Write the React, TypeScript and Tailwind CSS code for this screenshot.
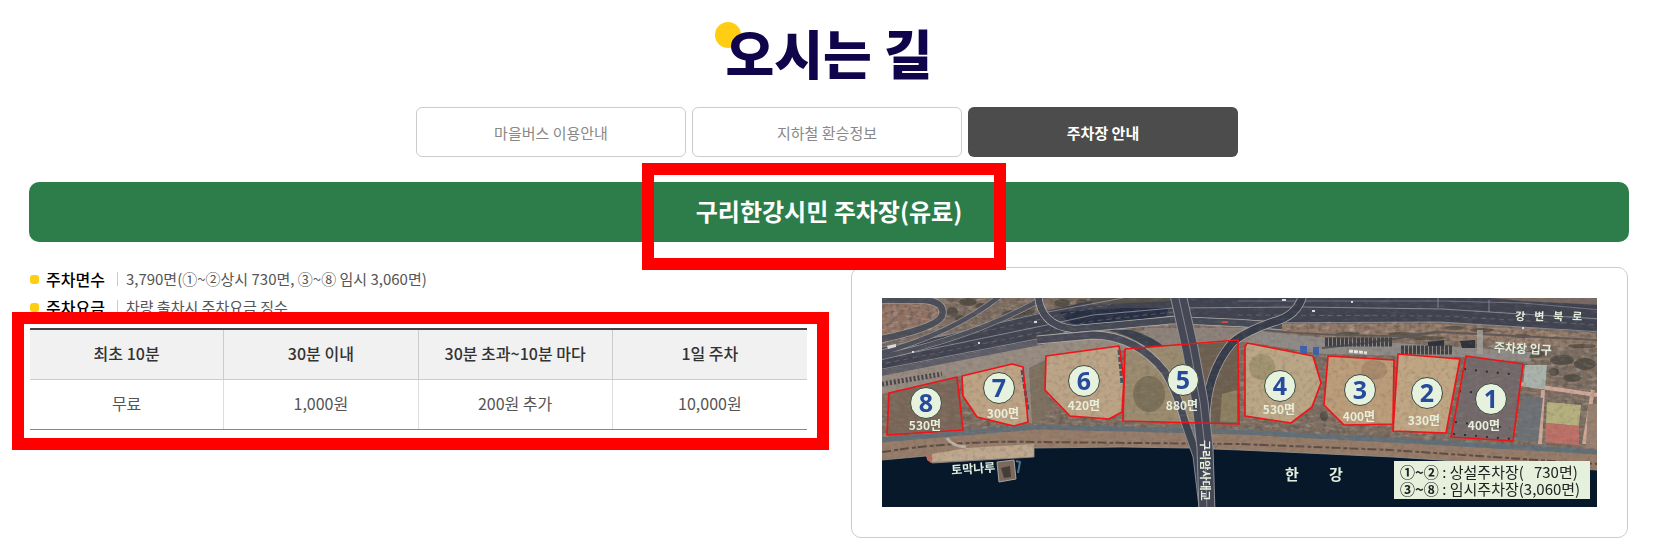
type Lot = {
  no: number;
  spaces: number;
  outline: string;
  x: number;
  y: number;
  labelX: number;
  labelY: number;
};

const TABS = ["마을버스 이용안내", "지하철 환승정보", "주차장 안내"];

const INFO = [
  { label: "주차면수", value: "3,790면(①~②상시 730면, ③~⑧ 임시 3,060면)" },
  { label: "주차요금", value: "차량 출차시 주차요금 징수" },
];

const FEES = [
  { label: "최초 10분", fee: "무료" },
  { label: "30분 이내", fee: "1,000원" },
  { label: "30분 초과~10분 마다", fee: "200원 추가" },
  { label: "1일 주차", fee: "10,000원" },
];

const LOTS: Lot[] = [
  { no: 8, spaces: 530, outline: "7,95 75,79 81,132 5,137", x: 44, y: 105, labelX: 43, labelY: 126 },
  { no: 7, spaces: 300, outline: "80,78 130,66 141,69 146,124 132,128 95,119 81,98", x: 117, y: 90, labelX: 121, labelY: 114 },
  { no: 6, spaces: 420, outline: "164,58 237,48 242,82 240,114 227,121 188,118 163,92", x: 202, y: 83, labelX: 202, labelY: 106 },
  { no: 5, spaces: 880, outline: "243,51 356,42 357,126 241,123", x: 301, y: 82, labelX: 300, labelY: 106 },
  { no: 4, spaces: 530, outline: "363,49 365,45 431,58 439,85 430,109 409,125 363,118", x: 398, y: 88, labelX: 397, labelY: 110 },
  { no: 3, spaces: 400, outline: "446,58 512,62 511,126 462,127 442,107", x: 478, y: 92, labelX: 477, labelY: 117 },
  { no: 2, spaces: 330, outline: "516,56 578,61 564,135 511,133", x: 545, y: 95, labelX: 542, labelY: 121 },
  { no: 1, spaces: 400, outline: "584,58 641,66 631,143 569,139", x: 609, y: 101, labelX: 602, labelY: 126 },
];

const LOT_FILL: Record<number, string> = {
  8: "#796759",
  7: "#bda384",
  6: "#bba385",
  5: "#9a8a6e",
  4: "#baa685",
  3: "#bb9c79",
  2: "#bfa582",
  1: "#74696a",
};

// x, y, rx, ry
const TREES = [
  [70, 14, 6, 5], [86, 4, 9, 4], [78, 20, 5, 3], [100, 8, 7, 3], [132, 16, 12, 4], [146, 12, 7, 5],
  [180, 5, 8, 4], [200, 4, 6, 3], [222, 3, 10, 3],
  [520, 36, 14, 2], [545, 40, 18, 2], [572, 30, 10, 2], [600, 32, 12, 2], [652, 56, 10, 4], [680, 62, 12, 5],
  [703, 66, 11, 6], [690, 80, 9, 4], [672, 74, 5, 4], [640, 38, 8, 2], [700, 48, 14, 2], [442, 118, 4, 5],
  [156, 68, 3, 6], [157, 100, 3, 8], [466, 36, 12, 2],
];

function ParkingMap() {
  return (
    <svg
      viewBox="0 0 715 209"
      role="img"
      aria-label="구리한강시민 주차장 위치도"
      className="block h-auto w-full font-['Noto_Sans_CJK_KR',sans-serif]"
    >
      <defs>
        <filter id="grain" x="0" y="0" width="100%" height="100%">
          <feTurbulence type="fractalNoise" baseFrequency="0.22" numOctaves="4" seed="4" />
          <feColorMatrix values="0 0 0 0 0.1  0 0 0 0 0.09  0 0 0 0 0.09  2.2 2.2 0 0 -2.1" />
        </filter>
        <filter id="speckle" x="0" y="0" width="100%" height="100%">
          <feTurbulence type="fractalNoise" baseFrequency="0.12 0.3" numOctaves="3" seed="11" />
          <feColorMatrix values="0 0 0 0 0.85  0 0 0 0 0.76  0 0 0 0 0.66  2 1.5 0 0 -1.65" />
        </filter>
        <filter id="soft">
          <feGaussianBlur stdDeviation="0.6" />
        </filter>
        <clipPath id="frame">
          <rect width="715" height="209" />
        </clipPath>
      </defs>

      <g clipPath="url(#frame)">
        <g filter="url(#soft)">
          <rect x="-5" y="-5" width="725" height="219" fill="#7d6d60" />
          <path d="M0 4 42 4Q58 8 54 20 40 32 0 38Z" fill="#917263" />
          <path d="M395 26 560 26 715 36 715 50 560 42 470 38 385 36Z" fill="#927866" />
        </g>
        <rect width="715" height="175" filter="url(#grain)" opacity=".5" />
        <rect width="715" height="175" filter="url(#speckle)" opacity=".2" />

        <g filter="url(#soft)">
          {TREES.map(([cx, cy, rx, ry]) => (
            <ellipse key={`${cx}-${cy}`} cx={cx} cy={cy} rx={rx} ry={ry} fill="#33342d" opacity=".55" />
          ))}

          {/* paved strip between the highway and the lots */}
          <path d="M0 78 155 46 211 36 262 46 285 75 243 52 164 58 155 128 146 124 141 69 130 66 80 78 0 96Z" fill="#978b81" />
          <path d="M147 70 163 62 163 92 170 108 156 126 150 126Z" fill="#7d705f" />
          <path d="M0 86 60 76" stroke="#44434a" strokeWidth="5" strokeDasharray="2 2" />
          <path d="M262 30 400 30 400 40 365 44 265 48Z" fill="#8d827a" />
          <path d="M364 44 380 34 470 42 590 50 650 54 645 64 580 59 440 56Z" fill="#8f8a86" />

          {/* highway */}
          <path d="M-5 50 60 38 155 15 191 7 241 -5 720 -5 720 35 640 29 558 24 356 25 291 19 211 29 155 42 -5 73Z" fill="#3f4250" />
          <path d="M211 7 291 3 288 -5 205 -5Z" fill="#57534d" />
          <path d="M560 -5 720 -5 720 7 640 3Z" fill="#786b63" />
          <path d="M178 14Q186 28 204 28L285 18 286 10 240 10Z" fill="#262e42" />
          <path d="M226 32Q270 42 296 84L298 66Q280 40 248 32Z" fill="#383f4d" />
          <g fill="none" stroke="#9799a3" strokeWidth=".8">
            <path d="M-5 62 155 29 211 17 291 10 420 9 560 11 720 21" />
            <path d="M-5 50 60 38 155 16 241 0" />
            <path d="M-5 72 155 41 211 28 291 18" />
            <path d="M356 3 560 3 640 5 720 12" opacity=".7" />
            <path d="M356 25 558 24 720 34" />
            <path d="M556 -4V10M607 2V14" />
          </g>
          <g fill="none" stroke="#7d818c" strokeWidth=".5" strokeDasharray="5 4">
            <path d="M-5 56 155 22 230 6" />
            <path d="M-5 67 155 35 211 23 291 14" />
            <path d="M356 17 558 18 720 27" />
          </g>
          <path d="M-5 76 155 45 215 33" fill="none" stroke="#5c5d67" strokeWidth="5" />

          {/* ramps */}
          <g fill="none" strokeLinejoin="round">
            <path d="M-5 2H42Q64 4 60 18 54 30 -5 42" stroke="#a7a39f" strokeWidth="8" />
            <path d="M-5 2H42Q64 4 60 18 54 30 -5 42" stroke="#4b4e59" strokeWidth="6.5" />
            <path d="M-5 56Q70 36 118 -2M-5 60Q90 40 158 2" stroke="#a09a95" strokeWidth="6" />
            <path d="M-5 56Q70 36 118 -2M-5 60Q90 40 158 2" stroke="#4e505b" strokeWidth="4.5" />
            <path d="M156 -4Q158 28 192 31 230 28 291 22L358 25 400 28" stroke="#b3b1b0" strokeWidth="8" />
            <path d="M156 -4Q158 28 192 31 230 28 291 22L358 25 400 28" stroke="#444855" strokeWidth="6.5" />
            <path d="M440 50Q500 44 555 34" stroke="#5a5656" strokeWidth="2" />
            <path d="M380 32Q440 38 520 38L555 34 715 42" stroke="#5f5956" strokeWidth="2" />
            <path d="M598 32 598 56" stroke="#a09a94" strokeWidth="6" />
          </g>

          {/* parked rows north of lots 2-4 */}
          <path d="M443 44H510M519 52H570" stroke="#3e4047" strokeWidth="9" strokeDasharray="3 1" />
          <path d="M467 53 485 55" stroke="#ece8e0" strokeWidth="3" strokeDasharray="4 1" />
          <path d="M418 48H425V56H418ZM431 49H437V57H431Z" fill="#3a62ab" />
          <path d="M546 44 562 42V48H546ZM578 43 593 42V50H580Z" fill="#2c303a" />

          {/* playing courts east of lot 1 */}
          <path d="M638 86 715 97M711 92 702 146M661 92 658 146" fill="none" stroke="#d0a898" strokeWidth="4" />
          <path d="M643 67 665 67 663 91 641 88Z" fill="#a9b3ab" />
          <path d="M640 98 661 100 656 144 634 142Z" fill="#6d7174" />
          <path d="M665 104 699 107 697 128 664 125Z" fill="#b5b07e" />
          <path d="M664 125 697 128 697 147 663 144Z" fill="#bd6f66" />
          <path d="M706 106H720V150H704Z" fill="#98806f" />
        </g>

        {LOTS.map((lot) => (
          <polygon key={lot.no} points={lot.outline} fill={LOT_FILL[lot.no]} />
        ))}
        <g filter="url(#soft)">
          <path d="M315 46 356 43V126H325L318 100Z" fill="#6d5f50" />
          <path d="M340 96 355 92V124H338Z" fill="#8c7f61" />
          <ellipse cx="267" cy="96" rx="16" ry="18" fill="#5d5542" opacity=".5" />
          <ellipse cx="380" cy="69" rx="13" ry="13" fill="#74704a" opacity=".35" />
          <ellipse cx="492" cy="72" rx="13" ry="10" fill="#7d6045" opacity=".3" />
          <g fill="none">
            <path d="M155 42 211 37Q255 38 283 74 296 96 303 124L315 158" stroke="#aaa8a6" strokeWidth="9" />
            <path d="M155 42 211 37Q255 38 283 74 296 96 303 124L315 158" stroke="#464a56" strokeWidth="7" />
            <path d="M324 130Q322 78 350 45 362 34 391 24 416 18 421 -4" stroke="#aaa8a6" strokeWidth="9" />
            <path d="M324 130Q322 78 350 45 362 34 391 24 416 18 421 -4" stroke="#343b49" strokeWidth="7.5" />
          </g>
        </g>
        <path d="M582 71 636 77M577 93 630 98M573 124 628 130M571 136 630 141" stroke="#292a2e" strokeWidth="2" strokeDasharray="2 9" />
        <path d="M140 72 146 112M237 52 240 86" stroke="#3f5363" strokeWidth="3" strokeDasharray="5 2" />

        {/* promenade and river bank */}
        <path d="M0 140 81 132 155 127 241 129 358 132 508 141 715 153V180H0Z" fill="#957b68" />
        <path d="M50 164V156L85 150 152 146V159Z" fill="#bda78d" />
        <path d="M0 142 81 135 155 129 241 131 358 134 508 142 715 154" fill="none" stroke="#626e76" strokeWidth="5" />
        <path d="M0 154Q80 142 152 144L358 146 508 152 715 166" fill="none" stroke="#5d4b43" strokeWidth="2" strokeDasharray="9 3 4 2" />
        <path d="M65 140Q70 148 84 149" fill="none" stroke="#bcb1a2" strokeWidth="3" />

        <rect width="715" height="175" filter="url(#grain)" opacity=".2" />
        <rect width="715" height="175" filter="url(#speckle)" opacity=".08" />

        <path d="M0 162 44 158 50 165 152 159 152 150 241 149 305 150 358 152 511 159 715 172V209H0Z" fill="#06182a" />
        <path d="M0 162 44 158 50 165 152 159 152 150 241 149 305 150 358 152 511 159 715 172" fill="none" stroke="#9a948c" strokeWidth=".8" />
        <path d="M44 155 51 160 49 165 45 162Z" fill="#b76d60" />
        <path d="M115 164 132 162 134 181 117 184Z" fill="#7b695e" stroke="#a9a29b" />
        <path d="M119 170 128 168 129 179 122 180Z" fill="#453d3a" />
        <path d="M134 163 138 164 136 175" fill="none" stroke="#55718a" strokeWidth="2" />

        {/* bridge */}
        <g fill="none">
          <path d="M303 124 315 158 321 209" stroke="#858991" strokeWidth="9" />
          <path d="M303 124 315 158 321 209" stroke="#3e4350" strokeWidth="7" />
          <path d="M296 -4 308 50 318 104 323 150 325 214" stroke="#8f9197" strokeWidth="17" />
          <path d="M296 -4 308 50 318 104 323 150 325 214" stroke="#464855" strokeWidth="15" />
          <path d="M296 -4 308 50 318 104 323 150 325 214" stroke="#83858d" strokeWidth="1" />
        </g>
        <g fill="#d8dadf">
          <path d="M5 48 14 46 14 49 6 51ZM30 53H32V55H30ZM96 44H98V46H96ZM430 12H433V14H430ZM400 1H404V3H400ZM152 23H155V25H152ZM469 3H471V5H469ZM640 29H642V31H640Z" />
        </g>
        <path d="M340 23H346V25H340Z" fill="#d0493f" />

        {LOTS.map((lot) => (
          <g key={lot.no} textAnchor="middle" dominantBaseline="central">
            <polygon points={lot.outline} fill="none" stroke="#f01418" strokeWidth="1.7" strokeLinejoin="round" />
            <text x={lot.labelX} y={lot.labelY} className="fill-[#e6efdb] text-[12px] font-bold">
              {lot.spaces}면
            </text>
            <circle cx={lot.x} cy={lot.y} r="15.5" fill="#e6f2de" stroke="#3b4a3c" />
            <text x={lot.x} y={lot.y - 1} className="fill-[#264a9c] font-['Noto_Sans',sans-serif] text-[25px] font-bold">
              {lot.no}
            </text>
          </g>
        ))}

        <g className="fill-[#e3eedd] text-[12px] font-bold" dominantBaseline="central">
          <text x="69" y="171" transform="rotate(-4 69 171)">토막나루</text>
          <text x="612" y="48" transform="rotate(3 612 48)">주차장 입구</text>
          <text y="17" x="633 652 671 690" rotate="3" className="text-[11px]">강변북로</text>
          <text x="324" y="142" transform="rotate(90 324 142)" className="text-[11px]">구리암사대교</text>
          <text x="403 447" y="175" className="text-[15px]">한강</text>
        </g>

        <rect x="512" y="163" width="196" height="38" fill="#e5f1dc" />
        <g className="fill-[#222] text-[15px]" dominantBaseline="central">
          <text x="518" y="173">
            <tspan className="font-bold">①~②</tspan> : 상설주차장(&nbsp;&nbsp;&nbsp;730면)
          </text>
          <text x="518" y="190">
            <tspan className="font-bold">③~⑧</tspan> : 임시주차장(3,060면)
          </text>
        </g>
      </g>
    </svg>
  );
}

export default function App() {
  return (
    <main className="bg-white pt-5 pr-9 pb-5 pl-[29px] font-['Noto_Sans_CJK_KR',sans-serif] text-base text-[#555]">
      <header className="flex justify-center">
        <h1 className="relative isolate text-[53px] leading-[64px] font-black text-[#10054a]">
          <span className="absolute top-0.5 -left-2.5 -z-10 size-[26px] rounded-full bg-[#ffcd11]" />
          오시는 길
        </h1>
      </header>

      <nav className="mt-[23px] flex justify-center gap-1.5 pr-1">
        {TABS.map((tab, i) => {
          const active = i === TABS.length - 1;
          return (
            <button
              key={tab}
              type="button"
              className={`h-[50px] w-[270px] rounded-md pt-0.5 text-[15px] ${
                active ? "bg-[#4c4c4c] font-bold text-white" : "border border-[#ccc] bg-white text-[#888]"
              }`}
            >
              {tab}
            </button>
          );
        })}
      </nav>

      <div className="mt-[25px] flex justify-center rounded-[10px] bg-[#2d7d4a]">
        <h2 className="relative flex h-[60px] items-center pb-0.5 text-2xl font-bold text-white">
          구리한강시민 주차장(유료)
          <span className="pointer-events-none absolute -top-[19px] -right-11 -bottom-7 -left-[54px] z-10 border-12 border-[#f00]" />
        </h2>
      </div>

      <div className="mx-px mt-6 grid grid-cols-2 items-start gap-11">
        <section>
          <ul className="flex flex-col gap-0.5 leading-[26px]">
            {INFO.map((item) => (
              <li key={item.label} className="flex items-center">
                <span className="mr-[7px] size-[9px] rounded-[3px] bg-[#ffcd11]" />
                <strong className="font-medium text-black">{item.label}</strong>
                <span className="mr-2 ml-3 h-3.5 w-px bg-[#ccc]" />
                <span className="text-[15px]">{item.value}</span>
              </li>
            ))}
          </ul>

          <div className="relative mt-2">
            <table className="w-full table-fixed border-separate border-spacing-0 border-t-2 border-b border-t-[#444] border-b-[#888] text-center">
              <thead>
                <tr className="h-[50px] bg-[#f1f1f1] text-[#333]">
                  {FEES.map((f) => (
                    <th key={f.label} scope="col" className="border-r border-b border-[#ccc] pb-1 font-medium last:border-r-0">
                      {f.label}
                    </th>
                  ))}
                </tr>
              </thead>
              <tbody>
                <tr className="h-[49px]">
                  {FEES.map((f) => (
                    <td key={f.label} className="border-r border-[#ddd] pb-1 last:border-r-0">
                      {f.fee}
                    </td>
                  ))}
                </tr>
              </tbody>
            </table>
            <span className="pointer-events-none absolute -top-4 -right-[22px] -bottom-5 -left-[18px] border-12 border-[#f00]" />
          </div>
        </section>

        <section className="mt-px rounded-[10px] border border-[#ccc] p-[30px]">
          <ParkingMap />
        </section>
      </div>
    </main>
  );
}
